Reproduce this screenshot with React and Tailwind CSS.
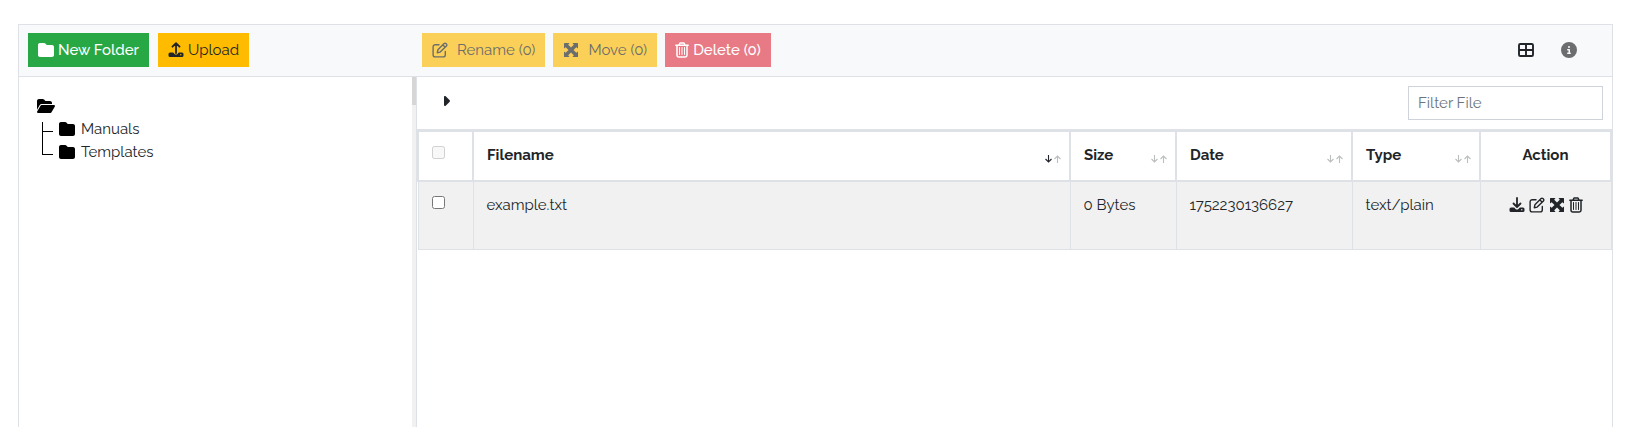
import React from "react";
import { FaFolder, FaFolderOpen, FaCircleInfo, FaCaretRight } from "react-icons/fa6";

const iconBox = "inline-block shrink-0";

function TrayIcon({ up }) {
  return (
    <svg viewBox="0 0 16 16" className={`${iconBox} h-4 w-4`} fill="none" stroke="currentColor" aria-hidden="true">
      <path strokeWidth="1.800" strokeLinecap="round" strokeLinejoin="round" d={up ? "M8 11V1.500M4.500 4.700L8 1.200L11.500 4.700" : "M8 1V9.800M4.500 6.500L8 10L11.500 6.500"} />
      <path fill="currentColor" stroke="none" fillRule="evenodd" d="M2 10.500h3.200l1.400 1.400a2 2 0 0 0 2.800 0l1.400-1.400H14a1.500 1.500 0 0 1 1.500 1.500v1.500a1.500 1.500 0 0 1-1.500 1.500H2A1.500 1.500 0 0 1 .5 13.500V12A1.500 1.500 0 0 1 2 10.500zM12.800 12.100a.7.7 0 1 0 0 1.400a.7.7 0 0 0 0-1.400z" />
    </svg>
  );
}

function EditIcon() {
  return (
    <svg viewBox="0 0 16 16" className={`${iconBox} h-4 w-4`} fill="none" stroke="currentColor" strokeWidth="1.400" strokeLinecap="round" strokeLinejoin="round" aria-hidden="true">
      <path d="M7 2.700H3.300A2.200 2.200 0 0 0 1.100 4.900v7.800a2.200 2.200 0 0 0 2.200 2.200h7.800a2.200 2.200 0 0 0 2.200-2.200V9.500" />
      <path d="M5.300 10.700l.6-2.900 6.200-6.200a1.300 1.300 0 0 1 1.800 0l.5.5a1.300 1.300 0 0 1 0 1.800L8.200 10.100zM10.900 2.900l2.200 2.200" />
    </svg>
  );
}

function MoveIcon() {
  return (
    <svg viewBox="-1 0 16 14" className={`${iconBox} h-3.5 w-4`} aria-hidden="true">
      <path fill="currentColor" d="M.6 0h4.900L4.200 1.700 7 4.500l2.800-2.800L8.500 0h4.900a.6.6 0 0 1 .6.6v4.900L12.300 4.200 9.500 7l2.800 2.800L14 8.500v4.900a.6.6 0 0 1-.6.6H8.500l1.300-1.700L7 9.500l-2.800 2.800L5.500 14H.6a.6.6 0 0 1-.6-.6V8.500l1.700 1.300L4.500 7 1.700 4.200 0 5.500V.6A.6.6 0 0 1 .6 0z" />
    </svg>
  );
}

function TrashIcon() {
  return (
    <svg viewBox="0 0 14 16" className={`${iconBox} h-4 w-3.5`} fill="none" stroke="currentColor" aria-hidden="true">
      <path strokeWidth="1.500" strokeLinecap="round" strokeLinejoin="round" d="M.8 3.200h12.400M4 3l1-2h4l1 2M2 3.500v9.800a1.700 1.700 0 0 0 1.700 1.700h6.600a1.700 1.700 0 0 0 1.700-1.700V3.500" />
      <path strokeLinecap="round" d="M4.500 5.500v7M7 5.500v7M9.500 5.500v7" />
    </svg>
  );
}

function GridIcon() {
  return (
    <svg viewBox="0 0 16 14" className={`${iconBox} h-3.5 w-4`} fill="none" stroke="currentColor" strokeWidth="1.900" aria-hidden="true">
      <rect x="1" y="1" width="14" height="12" rx="1.300" />
      <path d="M8 1v12M1 7h14" />
    </svg>
  );
}

function SortMark({ active }) {
  return (
    <svg viewBox="0 0 16 8" className="mt-3 h-2 w-4 shrink-0" fill="none" strokeWidth="1.100" aria-hidden="true">
      <path stroke={active ? "#212529" : "#bcbebf"} d="M3.500 0v7M.5 4l3 3 3-3" />
      <path stroke="#bcbebf" d="M12.500 8V1M9.500 4l3-3 3 3" />
    </svg>
  );
}

function ToolButton({ className, children, disabled }) {
  return (
    <button type="button" disabled={disabled} className={`flex h-[34px] items-center whitespace-nowrap px-2.5 ${className}`}>
      {children}
    </button>
  );
}

function HeadCell({ label, active, className }) {
  return (
    <th className={`border-2 border-[#dee2e6] py-[11px] pl-[13px] pr-2 align-top font-bold ${className}`}>
      <div className="flex h-6 justify-between">
        <span>{label}</span>
        <SortMark active={active} />
      </div>
    </th>
  );
}

const cell = "border border-[#dee2e6] px-[13px] py-[11px] align-top";

export default function App() {
  return (
    <main className="h-screen overflow-hidden bg-white pl-[18px] pr-[19px] pt-6 font-['Raleway','Lato',sans-serif] text-[15px] leading-6 text-[#212529]">
      <div className="flex h-full flex-col border border-b-0 border-[#dee2e6]">
        <header className="flex items-center border-b border-[#dee2e6] bg-[#f8f9fa] pb-[9px] pt-2">
          <div className="flex w-[394px] shrink-0 gap-[9px] pl-[9px]">
            <ToolButton className="gap-1 bg-[#28a745] font-medium text-white">
              <FaFolder className="h-4 w-4" /> New Folder
            </ToolButton>
            <ToolButton className="gap-1 bg-[#ffbb00]">
              <TrayIcon up /> Upload
            </ToolButton>
          </div>
          <div className="flex gap-2 pl-[9px]">
            <ToolButton disabled className="gap-[9px] bg-[#fbd058] text-[#6c6d6d]">
              <EditIcon /> Rename (0)
            </ToolButton>
            <ToolButton disabled className="gap-[9px] bg-[#fbd058] text-[#6c6d6d]">
              <MoveIcon /> Move (0)
            </ToolButton>
            <ToolButton disabled className="gap-1 bg-[#e77a84] font-medium text-white">
              <TrashIcon /> Delete (0)
            </ToolButton>
          </div>
          <div className="ml-auto flex items-center gap-[27px] pr-[35px]">
            <button type="button" aria-label="Grid view" className="flex"><GridIcon /></button>
            <button type="button" aria-label="Information" className="flex text-[#6c6d6f]"><FaCircleInfo className="h-4 w-4" /></button>
          </div>
        </header>
        <div className="flex min-h-0 grow">
          <aside className="flex w-[398px] shrink-0 border-r border-[#dee2e6]">
            <nav aria-label="Folders" className="grow pl-[18px] pt-[17px]">
              <button type="button" aria-label="Root folder" className="flex h-[23px] items-center text-black">
                <FaFolderOpen className="h-4 w-[18px]" />
              </button>
              <ul className="pl-[5px]">
                {["Manuals", "Templates"].map((name, i) => (
                  <li key={name} className="flex h-[23px] items-center">
                    <span className="flex h-full w-[11px] flex-col">
                      <span className={i === 0 ? "mt-[5px] h-[10px] border-b border-l border-black" : "h-[15px] border-b border-l border-black"} />
                      <span className={i === 0 ? "grow border-l border-black" : "grow"} />
                    </span>
                    <a href="#" className="flex items-center gap-1.5 pl-1.5">
                      <FaFolder className="h-4 w-4 text-black" /> {name}
                    </a>
                  </li>
                ))}
              </ul>
            </nav>
            <div className="w-1 bg-[#f1f1f1]"><div className="h-7 bg-[#d6d6d6]" /></div>
          </aside>
          <section className="min-w-0 grow">
            <div className="flex h-[52px] items-start justify-between pl-6 pr-[9px] pt-[9px]">
              <button type="button" aria-label="Expand path" className="flex py-[7px]"><FaCaretRight className="h-4 w-2.5" /></button>
              <input aria-label="Filter File" placeholder="Filter File" className="h-[34px] w-[195px] border border-[#ced4da] px-[9px] outline-none placeholder:text-[#6c757d]" />
            </div>
            <div className="border-t border-[#dee2e6]">
              <table className="w-full table-fixed border-collapse border border-[#dee2e6]">
                <thead>
                  <tr className="h-[50px] text-left">
                    <th className="w-[55px] border-2 border-[#dee2e6] px-[13px] py-[11px] align-top">
                      <input type="checkbox" disabled aria-label="Select all files" className="mt-[3px] block h-[13px] w-[13px]" />
                    </th>
                    <HeadCell label="Filename" active className="" />
                    <HeadCell label="Size" className="w-[106px]" />
                    <HeadCell label="Date" className="w-[176px]" />
                    <HeadCell label="Type" className="w-[128px]" />
                    <th className="w-[131px] border-2 border-[#dee2e6] px-3 py-[11px] text-center align-top font-bold">Action</th>
                  </tr>
                </thead>
                <tbody>
                  <tr className="h-[68px] bg-[#f1f1f1]">
                    <td className={cell}><input type="checkbox" aria-label="Select example.txt" className="mt-[3px] block h-[13px] w-[13px]" /></td>
                    <td className={cell}>example.txt</td>
                    <td className={cell}>0 Bytes</td>
                    <td className={cell}>1752230136627</td>
                    <td className={cell}>text/plain</td>
                    <td className={cell}>
                      <div className="flex h-6 items-center justify-center gap-1">
                        <button type="button" aria-label="Download" className="flex"><TrayIcon /></button>
                        <button type="button" aria-label="Rename" className="flex"><EditIcon /></button>
                        <button type="button" aria-label="Move" className="flex"><MoveIcon /></button>
                        <button type="button" aria-label="Delete" className="flex"><TrashIcon /></button>
                      </div>
                    </td>
                  </tr>
                </tbody>
              </table>
            </div>
          </section>
        </div>
      </div>
    </main>
  );
}
